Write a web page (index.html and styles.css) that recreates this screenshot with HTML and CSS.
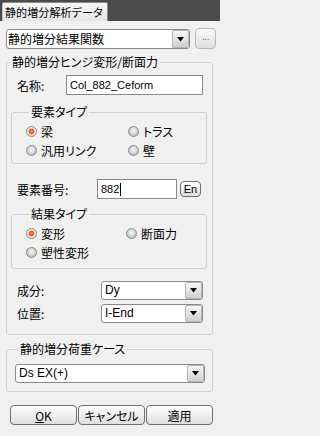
FILE: index.html
```html
<!DOCTYPE html>
<html lang="ja">
<head>
<meta charset="utf-8">
<title>静的増分解析データ</title>
<link rel="stylesheet" href="styles.css">
</head>
<body>
<div class="topbar"><div class="tab">静的増分解析データ</div></div>
<div class="panel">
  <div class="func-row">
    <div class="combo combo-func">
      <span class="combo-text jp">静的増分結果関数</span>
      <span class="drop"><svg width="7" height="5" viewBox="0 0 7 5"><polygon points="0,0 7,0 3.5,4.5" fill="#000"/></svg></span>
    </div>
    <button class="btn-dots">...</button>
  </div>

  <fieldset class="group group-main">
    <legend>静的増分ヒンジ変形/断面力</legend>
    <div class="field-row row-name">
      <span class="lbl">名称:</span>
      <div class="textbox">Col_882_Ceform</div>
    </div>

    <fieldset class="group inner inner-elem">
      <legend>要素タイプ</legend>
      <div class="radio-grid grid-elem">
        <div class="radio on"><span class="dot"></span>梁</div>
        <div class="radio"><span class="dot"></span>トラス</div>
        <div class="radio"><span class="dot"></span>汎用リンク</div>
        <div class="radio"><span class="dot"></span>壁</div>
      </div>
    </fieldset>

    <div class="field-row row-num">
      <span class="lbl">要素番号:</span>
      <div class="textbox">882<span class="caret"></span></div>
      <button class="btn-en">En</button>
    </div>

    <fieldset class="group inner inner-result">
      <legend>結果タイプ</legend>
      <div class="radio-grid grid-result">
        <div class="radio on"><span class="dot"></span>変形</div>
        <div class="radio"><span class="dot"></span>断面力</div>
        <div class="radio"><span class="dot"></span>塑性変形</div>
      </div>
    </fieldset>

    <div class="field-row row-sel row-comp">
      <span class="lbl">成分:</span>
      <div class="combo">
        <span class="combo-text">Dy</span>
        <span class="drop"><svg width="7" height="5" viewBox="0 0 7 5"><polygon points="0,0 7,0 3.5,4.5" fill="#000"/></svg></span>
      </div>
    </div>
    <div class="field-row row-sel row-pos">
      <span class="lbl">位置:</span>
      <div class="combo">
        <span class="combo-text">I-End</span>
        <span class="drop"><svg width="7" height="5" viewBox="0 0 7 5"><polygon points="0,0 7,0 3.5,4.5" fill="#000"/></svg></span>
      </div>
    </div>
  </fieldset>

  <fieldset class="group group-load">
    <legend>静的増分荷重ケース</legend>
    <div class="combo combo-load">
      <span class="combo-text">Ds EX(+)</span>
      <span class="drop"><svg width="7" height="5" viewBox="0 0 7 5"><polygon points="0,0 7,0 3.5,4.5" fill="#000"/></svg></span>
    </div>
  </fieldset>

  <div class="actions">
    <button class="btn"><u>O</u>K</button>
    <button class="btn">キャンセル</button>
    <button class="btn">適用</button>
  </div>
</div>
</body>
</html>
```
FILE: styles.css
```css
* { box-sizing: border-box; }

html, body {
  margin: 0;
  padding: 0;
}

body {
  width: 220px;
  height: 436px;
  background: #f0f0f0;
  font-family: "Noto Sans CJK JP", "Noto Sans", sans-serif;
  font-size: 12px;
  font-feature-settings: "palt";
  color: #000;
  overflow: hidden;
}

.topbar {
  height: 21px;
  background: #4b4b4b;
  padding: 2px 0 0 2px;
}

.tab {
  width: 106px;
  height: 19px;
  background: linear-gradient(#f6f6f6, #e6e6e6);
  border: 1px solid #8c8c8c;
  border-bottom: none;
  border-left-color: #bdbdbd;
  border-radius: 2px 2px 0 0;
  padding-left: 2px;
  font-size: 11px;
  line-height: 18px;
  letter-spacing: 0.1px;
  white-space: nowrap;
}

.panel {
  padding: 8px 0 0 6px;
}

.func-row {
  display: flex;
  align-items: flex-start;
  gap: 5px;
  height: 20px;
}

/* combo boxes */
.combo {
  display: flex;
  align-items: stretch;
  height: 19px;
  background: #fff;
  border: 1px solid #8a8a8a;
  border-radius: 3px;
  overflow: hidden;
}

.combo-func {
  width: 184px;
  height: 20px;
}

.combo-text {
  flex: 1;
  padding-left: 3px;
  font-family: "Liberation Sans", sans-serif;
  font-size: 12px;
  line-height: 17px;
  white-space: nowrap;
}

.combo-text.jp {
  font-family: "Noto Sans CJK JP", sans-serif;
  padding-left: 1px;
  line-height: 18px;
}

.drop {
  width: 17px;
  display: flex;
  align-items: center;
  justify-content: center;
  background: linear-gradient(#f7f7f7, #e4e4e4 50%, #cfcfcf);
  border: 1px solid #b4b4b4;
  border-radius: 2px;
  margin: 0;
}

.btn-dots {
  width: 21px;
  height: 21px;
  margin-top: -1px;
  padding: 0 0 4px;
  border: 1px solid #b8b8b8;
  border-radius: 4px;
  background: linear-gradient(#fafafa, #ececec 50%, #dddddd);
  color: #5a6ea0;
  font-family: "Liberation Sans", sans-serif;
  font-size: 10px;
  line-height: 10px;
  letter-spacing: -0.5px;
}

/* group boxes */
.group {
  margin: 0;
  padding: 0;
  min-width: 0;
  border: 1px solid #d0d0d0;
  border-radius: 3px;
}

.group legend {
  margin-left: 3px;
  padding: 0 2px;
  font-size: 12px;
  line-height: 12px;
  white-space: nowrap;
}

.group-main {
  width: 207px;
  margin-top: 7px;
  padding: 7px 0 11px;
}

.inner {
  margin: 11px 5px 0 4px;
}

.inner-elem {
  padding: 4px 0 3px 14px;
}

.inner-result {
  margin-top: 9px;
  padding: 4px 0 6px 14px;
}

.radio-grid {
  display: grid;
  grid-auto-rows: 19px;
}

.grid-elem { grid-template-columns: 102px auto; }
.grid-result { grid-template-columns: 100px auto; }

.radio {
  display: flex;
  align-items: center;
  gap: 4px;
  white-space: nowrap;
}

.dot {
  width: 11px;
  height: 11px;
  flex: none;
  border-radius: 50%;
  border: 1px solid #8a8a8a;
  background: radial-gradient(circle at 50% 42%, #f8f8f8 0, #d8d8d8 45%, #a9a9a9 100%);
}

.radio.on .dot {
  background: radial-gradient(circle at 50% 50%, #ff8a3a 0, #ee5a12 2.4px, #f4f4f4 3.4px, #d6d6d6 100%);
}

/* label + control rows */
.field-row {
  display: grid;
  align-items: center;
  padding-left: 10px;
}

.lbl {
  white-space: nowrap;
}

.row-name {
  grid-template-columns: 49px 137px;
}

.row-num {
  margin-top: 15px;
  grid-template-columns: 80px 80px 24px;
}

.row-sel {
  grid-template-columns: 84px 102px;
}

.row-comp { margin-top: 12px; }
.row-pos { margin-top: 4px; }

.textbox {
  height: 20px;
  background: #fff;
  border: 1px solid #8a8a8a;
  padding-left: 3px;
  font-family: "Liberation Sans", sans-serif;
  font-size: 11px;
  line-height: 18px;
  white-space: nowrap;
}

.caret {
  display: inline-block;
  width: 1px;
  height: 13px;
  background: #000;
  vertical-align: -3px;
  margin-left: 1px;
}

.btn-en {
  width: 21px;
  height: 16px;
  margin-left: 3px;
  padding: 0;
  border: 1px solid #707070;
  border-radius: 4px;
  background: linear-gradient(#fdfdfd, #ededed 50%, #dcdcdc);
  font-family: "Liberation Sans", sans-serif;
  font-size: 11px;
  line-height: 13px;
  color: #000;
}

.group-load {
  width: 207px;
  margin-top: 8px;
  padding: 9px 0 8px 8px;
}

.combo-load {
  width: 190px;
}

.actions {
  display: flex;
  gap: 1px;
  margin-top: 13px;
  padding-left: 4px;
}

.btn {
  width: 67px;
  height: 20px;
  padding: 0;
  border: 1px solid #707070;
  border-radius: 4px;
  background: linear-gradient(#fdfdfd, #efefef 50%, #dedede);
  font-family: "Noto Sans CJK JP", sans-serif;
  font-feature-settings: "palt";
  font-size: 12px;
  line-height: 17px;
  color: #000;
}

.btn u {
  text-decoration-thickness: 1px;
  text-underline-offset: 1px;
}
```
